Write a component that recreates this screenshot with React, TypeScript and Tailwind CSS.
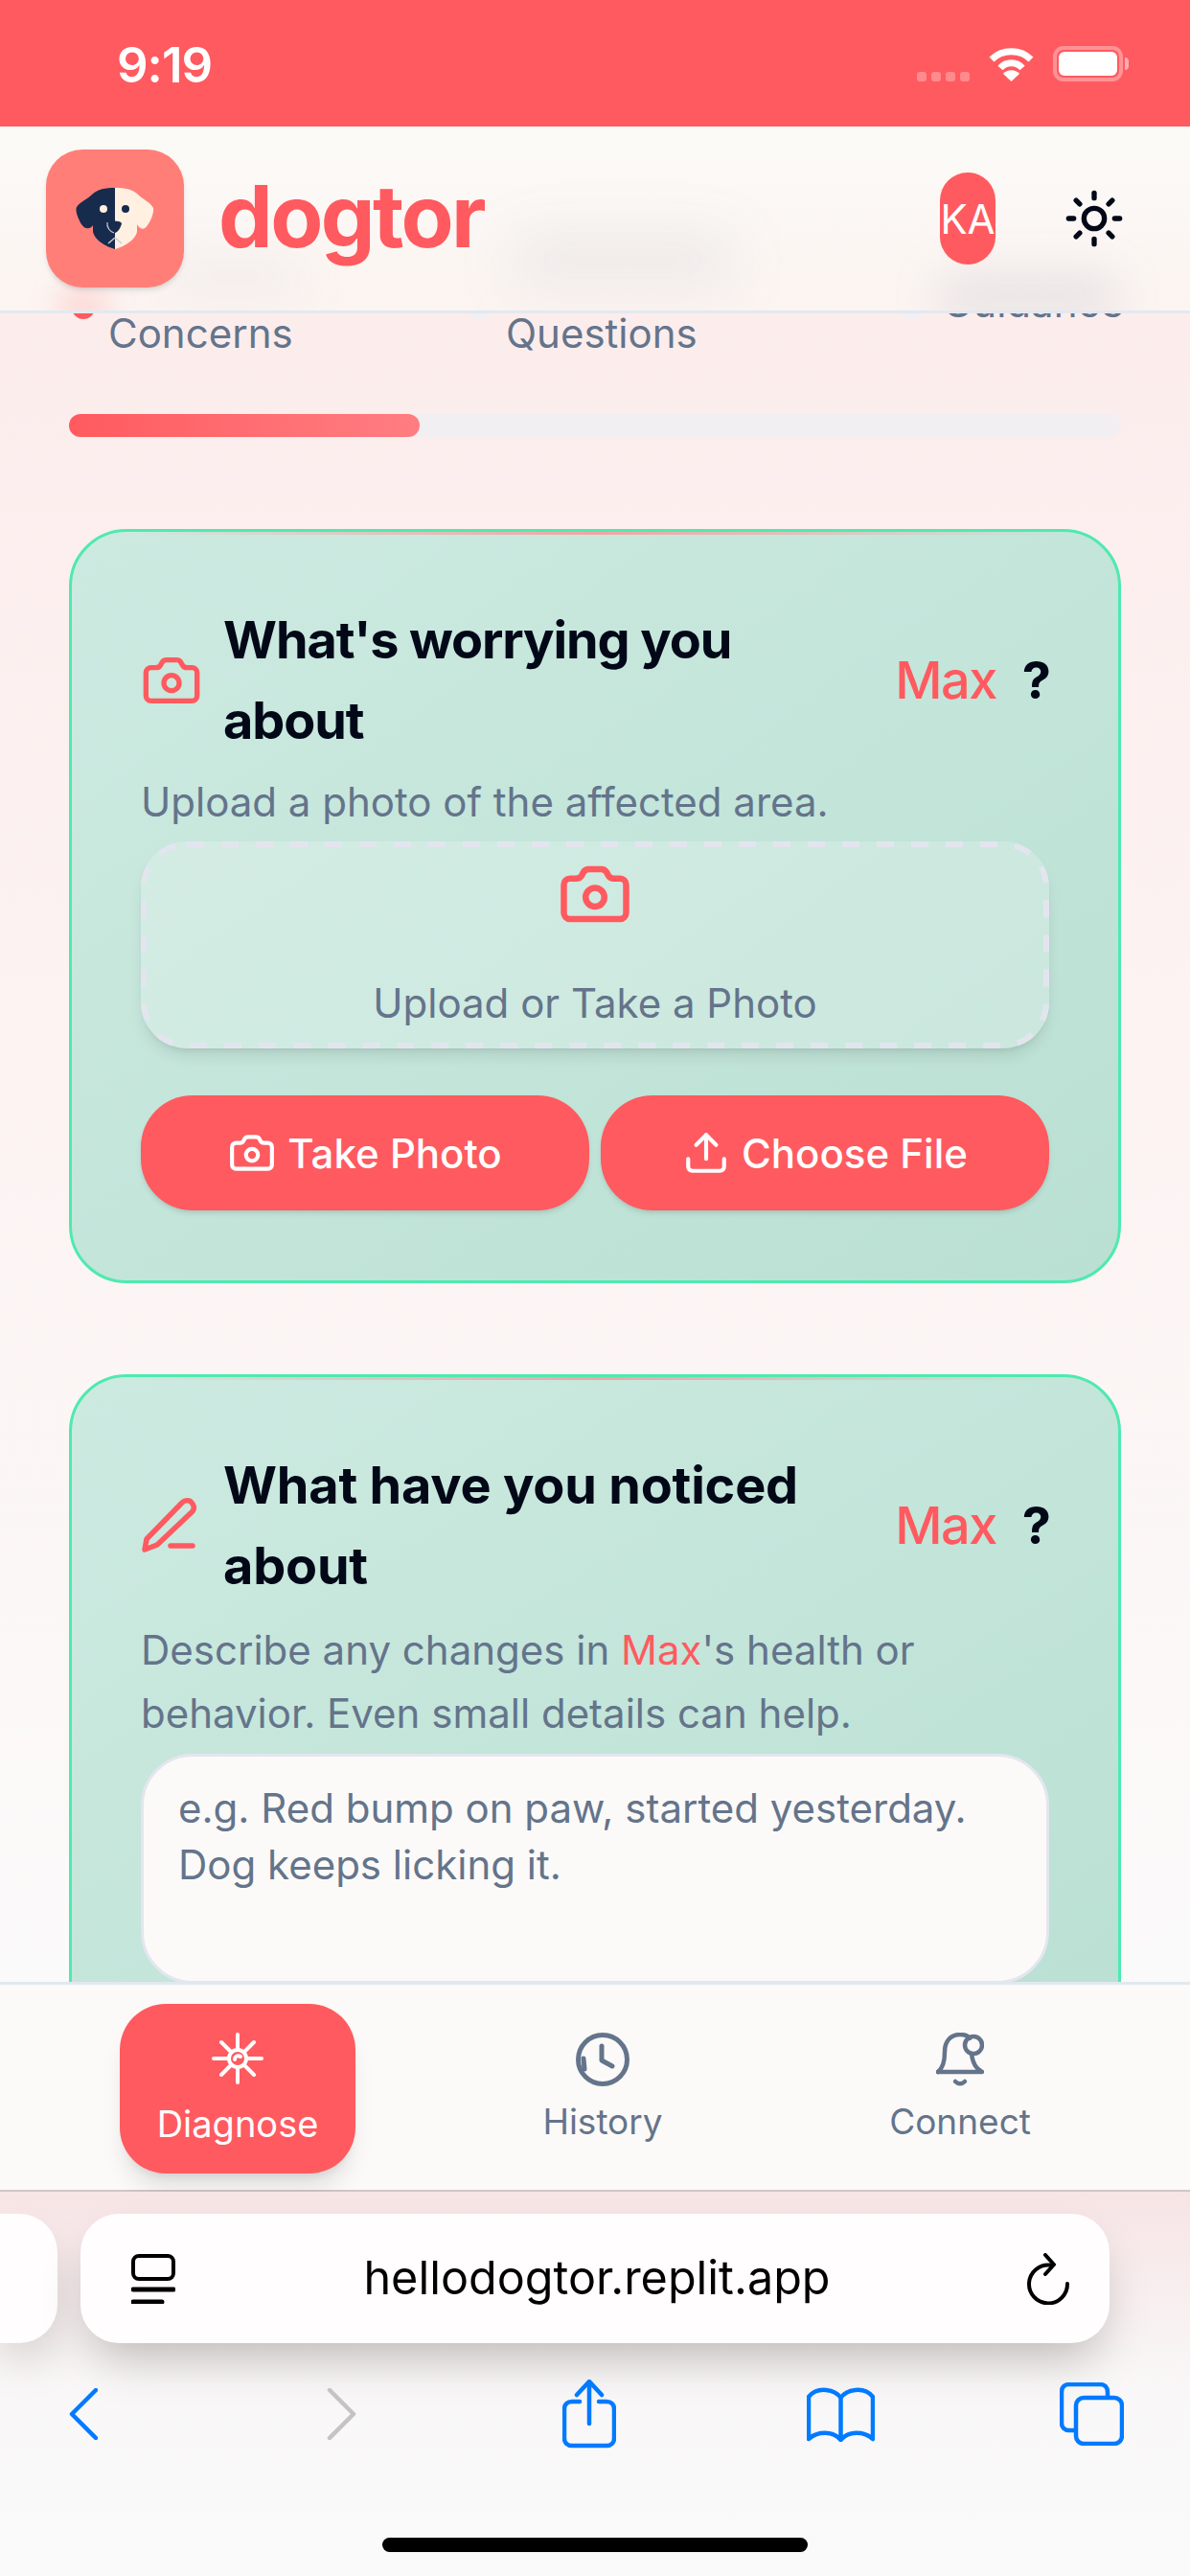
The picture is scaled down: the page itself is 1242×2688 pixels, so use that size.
import { Camera, Sun, Upload } from "lucide-react";

function DogLogo() {
  return (
    <svg width="82" height="65" viewBox="0 0 82 65">
      <path
        d="M41 0C31 0 23 1 17 7C12 12 4 15 1 20C-1 24 3 33 6 38C9 43 15 44 18 39L18 46C20 54 30 61 41 64Z"
        fill="#172b4d"
      />
      <path
        d="M41 0C51 0 59 1 65 7C70 12 78 15 81 21C82 26 78 35 75 39C72 44 67 44 64 38L64 46C62 54 52 61 41 64Z"
        fill="#fff0e2"
      />
      <circle cx="29" cy="22" r="4" fill="#fff0e2" />
      <circle cx="52" cy="22" r="4" fill="#172b4d" />
      <path d="M33 36C36 34 46 34 48 37C47 42 44 46 41 47C37 46 34 41 33 36Z" fill="#172b4d" />
      <path d="M33 36C32 41 36 46 40 47" fill="none" stroke="#c9ced8" strokeWidth="1.2" />
      <path d="M41 52L34 58M41 52L48 58" fill="none" stroke="#c9ced8" strokeWidth="1.5" />
    </svg>
  );
}

function Wifi() {
  return (
    <svg width="47" height="36" viewBox="0 0 47 36" fill="none">
      <path d="M3 13C14 2 33 2 44 13" stroke="white" strokeWidth="7" />
      <path d="M12 22C18 15 29 15 35 22" stroke="white" strokeWidth="7" />
      <path d="M23.5 36L15 28C19 23 28 23 32 28Z" fill="white" />
    </svg>
  );
}

function Battery() {
  return (
    <div className="flex items-center">
      <div className="w-[73px] h-[37px] rounded-[11px] border-[4px] border-white/35 p-[2px]">
        <div className="w-full h-full rounded-[6px] bg-white" />
      </div>
      <div className="ml-[2px] w-[4px] h-[13px] rounded-r-full bg-white/50" />
    </div>
  );
}

function PenIcon() {
  return (
    <svg width="60" height="58" viewBox="0 0 60 58" fill="none" stroke="#ff5a5f" strokeWidth="5.5" strokeLinecap="round" strokeLinejoin="round">
      <path d="M4 54L6 43L43 5C46 2 51 2 53 5C56 8 56 11 54 14L17 49Z" />
      <path d="M31 50H54" />
    </svg>
  );
}

function DiagnoseIcon() {
  return (
    <svg width="54" height="54" viewBox="0 0 54 54" fill="none" stroke="white" strokeWidth="4" strokeLinecap="round">
      <path d="M27 2V17M27 37V52M2 27H17M37 27H52M10 10L20 20M34 34L44 44M44 10L34 20M20 34L10 44" />
      <circle cx="27" cy="27" r="9" />
      <path d="M24 28C24 25 27 23 30 25" />
    </svg>
  );
}

function HistoryIcon() {
  return (
    <svg width="56" height="56" viewBox="0 0 56 56" fill="none" stroke="#64748b" strokeWidth="5" strokeLinecap="round" strokeLinejoin="round">
      <circle cx="28" cy="28" r="25.5" />
      <path d="M27 14V29L38 35" />
      <path d="M8 27L9 38" />
    </svg>
  );
}

function BellIcon() {
  return (
    <svg width="50" height="56" viewBox="0 0 50 56" fill="none" stroke="#64748b" strokeWidth="4.5" strokeLinecap="round" strokeLinejoin="round">
      <path d="M2 41C7 37 9 29 9 20C9 8 16 2 25 2C29 2 33 3 35 6" />
      <path d="M37 22C38 31 42 38 48 41H2" />
      <circle cx="39" cy="13" r="9" />
      <path d="M20 51C23 54 27 54 30 51" />
    </svg>
  );
}

function Reload() {
  return (
    <svg width="46" height="54" viewBox="0 0 46 54" fill="none" stroke="black" strokeWidth="4" strokeLinecap="round" strokeLinejoin="round">
      <path d="M43 32A20 20 0 1 1 25 12.500" />
      <path d="M20 2L29 12L20 22" />
    </svg>
  );
}

function ReaderIcon() {
  return (
    <svg width="46" height="52" viewBox="0 0 46 52" fill="none" stroke="black" strokeLinecap="round">
      <rect x="2" y="2" width="42" height="24" rx="6" strokeWidth="4" />
      <path d="M2 37H44" strokeWidth="5" />
      <path d="M2 50H32" strokeWidth="5" />
    </svg>
  );
}

function ToolbarIcon({ kind }: { kind: string }) {
  if (kind === "back") {
    return (
      <svg width="30" height="54" viewBox="0 0 30 54" fill="none" stroke="#007aff" strokeWidth="4.500" strokeLinecap="round" strokeLinejoin="round">
        <path d="M28 2L3 27L28 52" />
      </svg>
    );
  }
  if (kind === "forward") {
    return (
      <svg width="31" height="54" viewBox="0 0 31 54" fill="none" stroke="#c4c4c4" strokeWidth="4.500" strokeLinecap="round" strokeLinejoin="round">
        <path d="M3 2L28 27L3 52" />
      </svg>
    );
  }
  if (kind === "share") {
    return (
      <svg width="56" height="72" viewBox="0 0 56 72" fill="none" stroke="#007aff" strokeWidth="4.500" strokeLinecap="round" strokeLinejoin="round">
        <path d="M18 23H10C5 23 2 26 2 31V61C2 66 5 69 10 69H46C51 69 54 66 54 61V31C54 26 51 23 46 23H38" />
        <path d="M28 46V3M15 16L28 2L41 16" />
      </svg>
    );
  }
  if (kind === "book") {
    return (
      <svg width="71" height="58" viewBox="0 0 71 58" fill="none" stroke="#007aff" strokeWidth="4.500" strokeLinecap="round" strokeLinejoin="round">
        <path d="M35.500 12C30 4 12 -1 2 11V55C12 46 28 47 35.500 56C43 47 59 46 69 55V11C59 -1 41 4 35.500 12V56" />
      </svg>
    );
  }
  return (
    <svg width="67" height="66" viewBox="0 0 67 66" fill="none" stroke="#007aff" strokeWidth="4.500">
      <path d="M16 50H10C5 50 2 47 2 42V10C2 5 5 2 10 2H42C47 2 50 5 50 10V16" />
      <rect x="17" y="16" width="48" height="48" rx="8" />
    </svg>
  );
}

function CardHeading({ icon, first, tight }: { icon: React.ReactNode; first: string; tight: boolean }) {
  return (
    <div className="flex items-center">
      <div className="w-[72px] shrink-0 flex justify-start text-[#ff5a5f]">{icon}</div>
      <h2
        className={
          tight
            ? "ml-[14px] flex-1 text-[54px] leading-[84px] font-bold tracking-[-1.1px] text-[#020817]"
            : "ml-[14px] flex-1 text-[54px] leading-[84px] font-bold tracking-[-0.2px] text-[#020817]"
        }
      >
        {first}
        <br />
        about
      </h2>
      <span className="text-[54px] leading-[84px] font-medium text-[#ff5a5f] tracking-[-1.5px]">Max</span>
      <span className="ml-[27px] mr-[-2px] text-[54px] leading-[84px] font-bold text-[#020817]">?</span>
    </div>
  );
}

function Card({ children }: { children: React.ReactNode }) {
  return (
    <section className="relative mx-[72px] rounded-[60px] border-[3px] border-[#4eeab0] bg-gradient-to-br from-[#cdeae1] to-[#bae0d3] px-[72px] pt-[71px] pb-[73px] overflow-hidden">
      <div className="absolute top-0 left-[60px] right-[60px] h-[3px] bg-gradient-to-r from-transparent via-[#ff8a8a]/70 to-transparent" />
      {children}
    </section>
  );
}

export default function App() {
  return (
    <div className="w-[1242px] h-[2688px] flex flex-col overflow-hidden font-[Inter,sans-serif] bg-[#fafafa]">
      <div className="h-[132px] shrink-0 bg-[#ff5a5f] flex items-start pl-[122px] pr-[64px] pt-[38px]">
        <span className="text-[51px] leading-[60px] font-semibold text-white tracking-[-1px]">9:19</span>
        <div className="ml-auto flex items-center mt-[10px]">
          <div className="flex gap-[5px] mt-[26px]">
            <div className="w-[10px] h-[10px] rounded-[3px] bg-white/30" />
            <div className="w-[10px] h-[10px] rounded-[3px] bg-white/30" />
            <div className="w-[10px] h-[10px] rounded-[3px] bg-white/30" />
            <div className="w-[10px] h-[10px] rounded-[3px] bg-white/30" />
          </div>
          <div className="ml-[20px]">
            <Wifi />
          </div>
          <div className="ml-[20px]">
            <Battery />
          </div>
        </div>
      </div>

      <main className="relative flex-1 min-h-0 overflow-hidden bg-gradient-to-b from-[#fcebeb] via-[#fcf3f2] to-[#fbfafa]">
        <header className="absolute top-0 left-0 right-0 z-10 h-[195px] flex items-center pl-[48px] pr-[70px] border-b-[3px] border-[#e2e8f0] bg-gradient-to-b from-[#fbfaf7] to-[#fcf4f1] overflow-hidden">
          {/* page text blurred behind the bar */}
          <div className="absolute left-[170px] top-[140px] w-[150px] h-[34px] rounded-full bg-[#64748b]/8 blur-[26px]" />
          <div className="absolute left-[530px] top-[115px] w-[240px] h-[50px] rounded-full bg-[#64748b]/10 blur-[30px]" />
          <div className="absolute left-[975px] top-[155px] w-[195px] h-[44px] rounded-full bg-[#64748b]/14 blur-[24px]" />
          <div className="absolute left-[62px] top-[172px] w-[50px] h-[30px] rounded-full bg-[#ff5a5f]/25 blur-[16px]" />

          <div className="relative w-[144px] h-[144px] rounded-[38px] bg-[#ff7f78] flex items-center justify-center shadow-md">
            <DogLogo />
          </div>
          <span className="relative ml-[36px] text-[90px] leading-none font-bold tracking-[-2.6px] text-[#ff5a5f] pb-[4px]">dogtor</span>
          <div className="relative ml-auto w-[58px] h-[96px] rounded-full bg-[#ff5a5f] flex items-center justify-center text-[42px] text-white">
            KA
          </div>
          <div className="relative ml-[71px] mr-[-2px] text-[#020817]">
            <Sun size={64} strokeWidth={2} />
          </div>
        </header>

        <div className="grid grid-cols-[413px_451px_1fr] pl-[75px] pr-[72px] pt-[126px] text-[42px] leading-[60px] text-[#64748b]">
          <div className="flex items-start">
            <div className="w-[24px] h-[24px] mt-[51px] rounded-full bg-[#ff5a5f] shrink-0" />
            <div className="ml-[14px] mt-[60px]">Concerns</div>
          </div>
          <div className="flex items-start">
            <div className="w-[24px] h-[24px] mt-[51px] rounded-full bg-[#eef0f6] shrink-0" />
            <div className="ml-[16px] mt-[60px]">Questions</div>
          </div>
          <div className="flex items-start">
            <div className="w-[24px] h-[24px] mt-[51px] rounded-full bg-[#eef0f6] shrink-0" />
            <div className="ml-[21px] mt-[28px]">Guidance</div>
          </div>
        </div>

        <div className="mx-[72px] mt-[54px] h-[24px] rounded-full bg-[#f2eff2]">
          <div className="w-[366px] h-full rounded-full bg-gradient-to-r from-[#ff5a5f] to-[#ff7d82]" />
        </div>

        <div className="mt-[96px]">
          <Card>
            <CardHeading tight icon={<Camera size={64} strokeWidth={2} />} first="What's worrying you" />
            <p className="mt-[10px] text-[42px] leading-[66px] text-[#64748b]">Upload a photo of the affected area.</p>
            <div className="relative mt-[8px] h-[216px] rounded-[48px] bg-white/20 shadow-lg flex flex-col items-center pt-[16px]">
              <svg className="absolute inset-0" width="948" height="216" fill="none">
                <rect x="3" y="3" width="942" height="210" rx="45" stroke="#e3e5ee" strokeWidth="6" strokeDasharray="18 18" />
              </svg>
              <div className="text-[#ff5a5f]">
                <Camera size={78} strokeWidth={2} />
              </div>
              <span className="mt-[45px] text-[42px] leading-[60px] text-[#64748b]">Upload or Take a Photo</span>
            </div>
            <div className="mt-[49px] grid grid-cols-2 gap-[12px]">
              <button className="h-[120px] rounded-[54px] bg-[#ff5a5f] shadow-md flex items-center justify-center gap-[12px] text-[42px] font-medium text-white">
                <Camera size={50} strokeWidth={2} />
                Take Photo
              </button>
              <button className="h-[120px] rounded-[54px] bg-[#ff5a5f] shadow-md flex items-center justify-center gap-[12px] text-[42px] font-medium text-white">
                <Upload size={50} strokeWidth={2} />
                Choose File
              </button>
            </div>
          </Card>
        </div>

        <div className="mt-[95px]">
          <Card>
            <CardHeading tight={false} icon={<PenIcon />} first="What have you noticed" />
            <p className="mt-[13px] text-[42px] leading-[66px] text-[#64748b]">
              Describe any changes in <span className="text-[#ff5a5f]">Max</span>'s health or
              <br />
              behavior. Even small details can help.
            </p>
            <textarea
              className="block mt-[9px] w-full h-[240px] resize-none rounded-[54px] border-[3px] border-[#e3e6ef] bg-[#fcfaf8] px-[36px] pt-[24px] text-[42px] leading-[59px] placeholder-[#64748b] outline-none"
              placeholder="e.g. Red bump on paw, started yesterday. Dog keeps licking it."
            />
          </Card>
        </div>
      </main>

      <nav className="h-[219px] shrink-0 flex items-start pl-[125px] border-t-[3px] border-[#e2e8f0] bg-[#fbfaf8] border-b-[2px] border-b-[#d3c4c7]">
        <div className="mt-[20px] w-[246px] h-[177px] rounded-[48px] bg-[#ff5a5f] shadow-xl flex flex-col items-center pt-[30px] text-white">
          <DiagnoseIcon />
          <span className="mt-[17px] text-[38px] leading-[48px]">Diagnose</span>
        </div>
        <div className="ml-[168px] w-[180px] mt-[50px] flex flex-col items-center text-[#64748b]">
          <HistoryIcon />
          <span className="mt-[13px] text-[37px] leading-[48px]">History</span>
        </div>
        <div className="ml-[193px] w-[180px] mt-[50px] flex flex-col items-center text-[#64748b]">
          <BellIcon />
          <span className="mt-[13px] text-[37px] leading-[48px]">Connect</span>
        </div>
      </nav>

      <div className="h-[401px] shrink-0 bg-gradient-to-b from-[#f7e4e5] via-[#f9f7f7] to-[#fafafa] overflow-hidden">
        <div className="mt-[23px] flex gap-[24px] h-[135px]">
          <div className="w-[60px] rounded-r-[40px] bg-[#fffdfd] shadow-2xl" />
          <div className="w-[1074px] rounded-[40px] bg-[#fffdfd] shadow-2xl flex items-center pl-[53px] pr-[41px]">
            <ReaderIcon />
            <span className="flex-1 pr-[8px] text-center text-[48.5px] text-black">hellodogtor.replit.app</span>
            <Reload />
          </div>
        </div>
        <div className="mt-[34px] h-[80px] flex items-center pl-[72px]">
          <ToolbarIcon kind="back" />
          <div className="ml-[239px]">
            <ToolbarIcon kind="forward" />
          </div>
          <div className="ml-[215px]">
            <ToolbarIcon kind="share" />
          </div>
          <div className="ml-[199px]">
            <ToolbarIcon kind="book" />
          </div>
          <div className="ml-[193px]">
            <ToolbarIcon kind="tabs" />
          </div>
        </div>
        <div className="mt-[89px] mx-auto w-[444px] h-[15px] rounded-full bg-black" />
      </div>
    </div>
  );
}
